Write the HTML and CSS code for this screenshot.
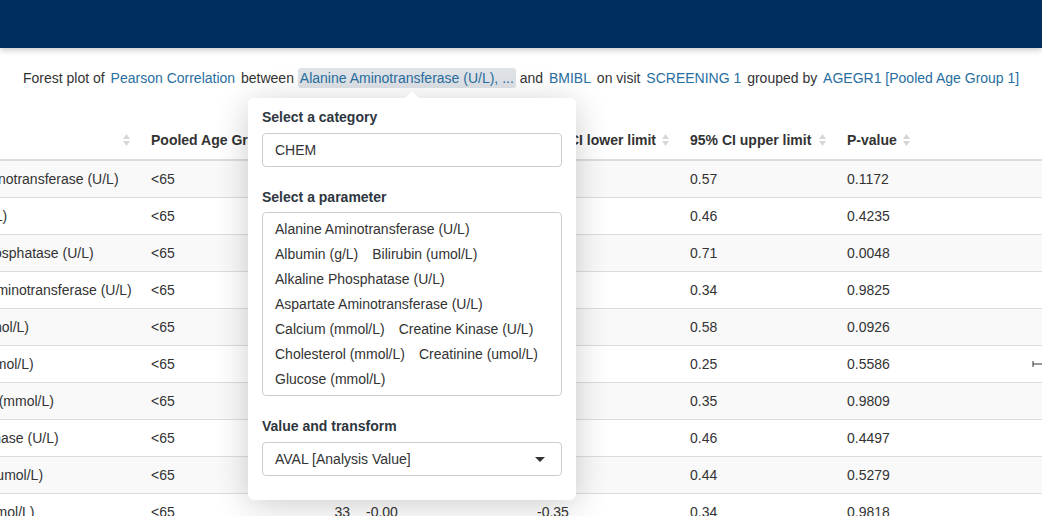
FILE: index.html
```html
<!DOCTYPE html>
<html lang="en">
<head>
<meta charset="utf-8">
<title>Forest plot</title>
<link rel="stylesheet" href="styles.css">
</head>
<body>
<header class="navbar"></header>
<main class="page">
  <p class="subtitle">Forest plot of <a class="lnk">Pearson Correlation</a> between <a class="lnk trigger">Alanine Aminotransferase (U/L), ...</a> and <a class="lnk">BMIBL</a> on visit <a class="lnk">SCREENING 1</a> grouped by <a class="lnk">AGEGR1 [Pooled Age Group 1]</a></p>
  <div class="table-scroll">
    <table class="results">
      <colgroup>
        <col class="w-param"><col class="w-group"><col class="w-n"><col class="w-est"><col class="w-lo"><col class="w-hi"><col class="w-p"><col class="w-plot">
      </colgroup>
      <thead>
        <tr>
          <th><div class="th-in"><span>Parameter</span><svg class="sort" width="7" height="12" viewBox="0 0 7 12"><path d="M0 5 L3.5 0 L7 5Z"/><path d="M0 7 L3.5 12 L7 7Z"/></svg></div></th>
          <th><div class="th-in"><span>Pooled Age Group 1</span><svg class="sort" width="7" height="12" viewBox="0 0 7 12"><path d="M0 5 L3.5 0 L7 5Z"/><path d="M0 7 L3.5 12 L7 7Z"/></svg></div></th>
          <th><div class="th-in th-right"><span>N</span></div></th>
          <th><div class="th-in"><span>Correlation</span><svg class="sort" width="7" height="12" viewBox="0 0 7 12"><path d="M0 5 L3.5 0 L7 5Z"/><path d="M0 7 L3.5 12 L7 7Z"/></svg></div></th>
          <th><div class="th-in"><span>95% CI lower limit</span><svg class="sort" width="7" height="12" viewBox="0 0 7 12"><path d="M0 5 L3.5 0 L7 5Z"/><path d="M0 7 L3.5 12 L7 7Z"/></svg></div></th>
          <th><div class="th-in"><span>95% CI upper limit</span><svg class="sort" width="7" height="12" viewBox="0 0 7 12"><path d="M0 5 L3.5 0 L7 5Z"/><path d="M0 7 L3.5 12 L7 7Z"/></svg></div></th>
          <th><div class="th-in"><span>P-value</span><svg class="sort" width="7" height="12" viewBox="0 0 7 12"><path d="M0 5 L3.5 0 L7 5Z"/><path d="M0 7 L3.5 12 L7 7Z"/></svg></div></th>
          <th></th>
        </tr>
      </thead>
      <tbody>
        <tr><td>Alanine Aminotransferase (U/L)</td><td>&lt;65</td><td class="num">33</td><td>0.28</td><td>-0.07</td><td>0.57</td><td>0.1172</td><td><svg class="ci" width="280" height="20"><line x1="157" y1="10" x2="252" y2="10"/><line x1="157" y1="7" x2="157" y2="13"/><line x1="252" y1="7" x2="252" y2="13"/></svg></td></tr>
        <tr><td>Albumin (g/L)</td><td>&lt;65</td><td class="num">33</td><td>0.14</td><td>-0.21</td><td>0.46</td><td>0.4235</td><td><svg class="ci" width="280" height="20"><line x1="136" y1="10" x2="237" y2="10"/><line x1="136" y1="7" x2="136" y2="13"/><line x1="237" y1="7" x2="237" y2="13"/></svg></td></tr>
        <tr><td>Alkaline Phosphatase (U/L)</td><td>&lt;65</td><td class="num">33</td><td>0.48</td><td>0.16</td><td>0.71</td><td>0.0048</td><td><svg class="ci" width="280" height="20"><line x1="192" y1="10" x2="274" y2="10"/><line x1="192" y1="7" x2="192" y2="13"/><line x1="274" y1="7" x2="274" y2="13"/></svg></td></tr>
        <tr><td>Aspartate Aminotransferase (U/L)</td><td>&lt;65</td><td class="num">33</td><td>0.00</td><td>-0.34</td><td>0.34</td><td>0.9825</td><td><svg class="ci" width="280" height="20"><line x1="117" y1="10" x2="219" y2="10"/><line x1="117" y1="7" x2="117" y2="13"/><line x1="219" y1="7" x2="219" y2="13"/></svg></td></tr>
        <tr><td>Bilirubin (umol/L)</td><td>&lt;65</td><td class="num">33</td><td>0.30</td><td>-0.05</td><td>0.58</td><td>0.0926</td><td><svg class="ci" width="280" height="20"><line x1="160" y1="10" x2="255" y2="10"/><line x1="160" y1="7" x2="160" y2="13"/><line x1="255" y1="7" x2="255" y2="13"/></svg></td></tr>
        <tr><td>Calcium (mmol/L)</td><td>&lt;65</td><td class="num">33</td><td>-0.11</td><td>-0.44</td><td>0.25</td><td>0.5586</td><td><svg class="ci" width="280" height="20"><line x1="102" y1="10" x2="206" y2="10"/><line x1="102" y1="7" x2="102" y2="13"/><line x1="206" y1="7" x2="206" y2="13"/></svg></td></tr>
        <tr><td>Cholesterol (mmol/L)</td><td>&lt;65</td><td class="num">33</td><td>0.00</td><td>-0.34</td><td>0.35</td><td>0.9809</td><td><svg class="ci" width="280" height="20"><line x1="117" y1="10" x2="220" y2="10"/><line x1="117" y1="7" x2="117" y2="13"/><line x1="220" y1="7" x2="220" y2="13"/></svg></td></tr>
        <tr><td>Creatine Kinase (U/L)</td><td>&lt;65</td><td class="num">33</td><td>0.14</td><td>-0.22</td><td>0.46</td><td>0.4497</td><td><svg class="ci" width="280" height="20"><line x1="135" y1="10" x2="237" y2="10"/><line x1="135" y1="7" x2="135" y2="13"/><line x1="237" y1="7" x2="237" y2="13"/></svg></td></tr>
        <tr><td>Creatinine (umol/L)</td><td>&lt;65</td><td class="num">33</td><td>0.11</td><td>-0.24</td><td>0.44</td><td>0.5279</td><td><svg class="ci" width="280" height="20"><line x1="132" y1="10" x2="234" y2="10"/><line x1="132" y1="7" x2="132" y2="13"/><line x1="234" y1="7" x2="234" y2="13"/></svg></td></tr>
        <tr><td>Glucose (mmol/L)</td><td>&lt;65</td><td class="num">33</td><td>-0.00</td><td>-0.35</td><td>0.34</td><td>0.9818</td><td><svg class="ci" width="280" height="20"><line x1="116" y1="10" x2="219" y2="10"/><line x1="116" y1="7" x2="116" y2="13"/><line x1="219" y1="7" x2="219" y2="13"/></svg></td></tr>
      </tbody>
    </table>
  </div>
</main>

<div class="popover">
  <div class="group">
    <label class="lbl">Select a category</label>
    <div class="field">CHEM</div>
  </div>
  <div class="group group-list">
    <label class="lbl">Select a parameter</label>
    <div class="multi">
      <span class="opt">Alanine Aminotransferase (U/L)</span>
      <span class="opt">Albumin (g/L)</span>
      <span class="opt">Bilirubin (umol/L)</span>
      <span class="opt">Alkaline Phosphatase (U/L)</span>
      <span class="opt">Aspartate Aminotransferase (U/L)</span>
      <span class="opt">Calcium (mmol/L)</span>
      <span class="opt">Creatine Kinase (U/L)</span>
      <span class="opt">Cholesterol (mmol/L)</span>
      <span class="opt">Creatinine (umol/L)</span>
      <span class="opt">Glucose (mmol/L)</span>
    </div>
  </div>
  <div class="group">
    <label class="lbl">Value and transform</label>
    <div class="field select"><span>AVAL [Analysis Value]</span><span class="caret"></span></div>
  </div>
</div>
</body>
</html>
```
FILE: styles.css
```css
html, body {
  overflow: hidden;
}
body {
  margin: 0;
  position: relative;
  font-family: "Liberation Sans", Arial, Helvetica, sans-serif;
  font-size: 14px;
  line-height: 20px;
  color: #333;
  background: #fff;
}
.navbar {
  height: 48px;
  background: #002f5e;
  box-shadow: 0 2px 6px rgba(0, 0, 0, 0.22);
  position: relative;
  z-index: 1;
}
.subtitle {
  margin: 20px 0 0;
  padding-left: 23px;
  white-space: nowrap;
  line-height: 20px;
}
.lnk {
  display: inline-block;
  vertical-align: top;
  padding: 0 2px;
  color: #296ea0;
  text-decoration: none;
  line-height: 20px;
}
.trigger {
  background: #dfe3e7;
  border-radius: 3px;
}
.table-scroll {
  margin-top: 35px;
  overflow: hidden;
}
.results {
  margin-left: -84px;
  width: 1307px;
  table-layout: fixed;
  border-collapse: separate;
  border-spacing: 0;
}
.w-param { width: 227px; }
.w-group { width: 170px; }
.w-n { width: 45px; }
.w-est { width: 171px; }
.w-lo { width: 153px; }
.w-hi { width: 157px; }
.w-p { width: 84px; }
.w-plot { width: 300px; }
.results th {
  text-align: left;
  font-weight: bold;
  padding: 7px 13px 9px 8px;
  border-bottom: 2px solid #ddd;
  white-space: nowrap;
  overflow: hidden;
}
.th-in {
  display: flex;
  align-items: center;
}
.th-right {
  justify-content: flex-end;
}
.sort {
  margin-left: auto;
  flex: none;
  fill: #d6d6d6;
}
.results td {
  padding: 8px;
  border-top: 1px solid #ddd;
  white-space: nowrap;
  overflow: hidden;
}
.results tbody tr:first-child td {
  border-top: 0;
}
.results tbody tr:nth-child(odd) td {
  background: #f9f9f9;
}
.results td.num {
  text-align: right;
}
.ci {
  display: block;
  stroke: #333;
  stroke-width: 1;
}
.popover {
  position: absolute;
  left: 248px;
  top: 98px;
  width: 300px;
  padding: 9px 14px 24px;
  background: #fff;
  border-radius: 6px;
  box-shadow: 0 5px 34px rgba(0, 0, 0, 0.2);
  z-index: 2;
}
.popover::before {
  content: "";
  position: absolute;
  top: -7px;
  left: 157px;
  border-left: 7px solid transparent;
  border-right: 7px solid transparent;
  border-bottom: 7px solid #fff;
}
.group + .group {
  margin-top: 20px;
}
.lbl {
  display: block;
  font-weight: bold;
  color: #2e3640;
  margin-bottom: 6px;
}
.group-list .lbl {
  margin-bottom: 5px;
}
.field {
  box-sizing: border-box;
  height: 34px;
  border: 1px solid #ccc;
  border-radius: 4px;
  padding: 6px 12px;
  color: #333;
}
.multi {
  border: 1px solid #ccc;
  border-radius: 4px;
  padding: 4px 5px 3px;
  display: flex;
  flex-wrap: wrap;
  line-height: 25px;
}
.opt {
  padding: 0 7px;
  white-space: nowrap;
}
.select {
  display: flex;
  align-items: center;
  justify-content: space-between;
  padding-right: 16px;
}
.caret {
  width: 0;
  height: 0;
  border-top: 5px solid #333;
  border-left: 5px solid transparent;
  border-right: 5px solid transparent;
}
```
